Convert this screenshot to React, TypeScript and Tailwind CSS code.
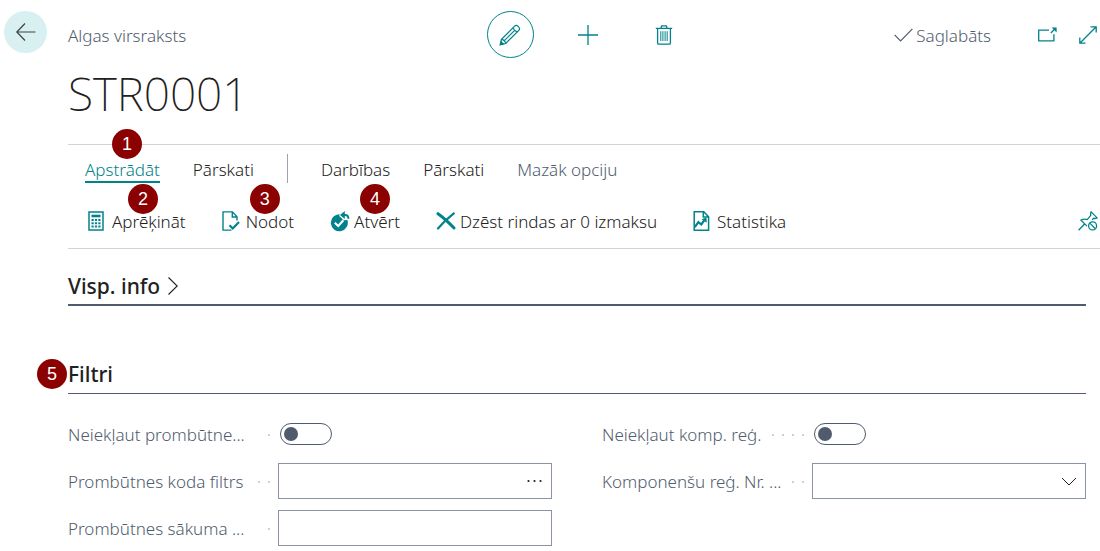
import type { ReactNode } from 'react';

const iconProps = { fill: 'none', stroke: 'currentColor', 'aria-hidden': true } as const;

function Badge({ n, className }: { n: number; className: string }) {
  return (
    <span
      className={`absolute z-10 flex size-[30px] items-center justify-center rounded-full bg-[#8b0000] text-lg leading-none font-normal text-white font-['Liberation_Sans',sans-serif] ${className}`}
    >
      {n}
    </span>
  );
}

function BackIcon() {
  return (
    <svg {...iconProps} width="22" height="20" viewBox="0 0 22 20" strokeWidth="1.2">
      <path d="M20.500 10H2M10 1.500L1.800 10l8.200 8.500" />
    </svg>
  );
}

function PencilIcon() {
  return (
    <svg {...iconProps} width="22" height="22" viewBox="0 0 22 22" strokeWidth="1.200">
      <path d="M1.300 20.700l1.200-5.400L15.400 2.400a2.700 2.700 0 0 1 3.800 0l.4.4a2.700 2.700 0 0 1 0 3.800L6.700 19.500z" />
      <path d="M14.300 3.500q.6 3.600 4.200 4.200M2.500 15.300q3.600.6 4.200 4.200M4.800 17.200l10.600-10.600" />
      <path d="M1.300 20.700l.7-3 2.300 2.300z" fill="currentColor" />
    </svg>
  );
}

function PlusIcon() {
  return (
    <svg {...iconProps} width="20" height="20" viewBox="0 0 20 20" strokeWidth="1.300">
      <path d="M10 0v20M0 10h20" />
    </svg>
  );
}

function TrashIcon() {
  return (
    <svg {...iconProps} width="18" height="20" viewBox="0 0 18 20" strokeWidth="1.300">
      <path d="M.8 3.300h16.400M6.300 3V1.300q0-.5.5-.5h4.400q.5 0 .5.5V3M2.600 3.300V18q0 1.200 1.200 1.200h10.400q1.200 0 1.200-1.200V3.300" />
      <path d="M5.800 6.200v9.800M7.900 6.200v9.800M10.100 6.200v9.800M12.200 6.200v9.800" strokeWidth="1" />
    </svg>
  );
}

function SavedIcon() {
  return (
    <svg {...iconProps} width="19" height="14" viewBox="0 0 19 14" strokeWidth="1.200">
      <path d="M.6 6.800l6 6.200L18.400.8" />
    </svg>
  );
}

function PopOutIcon() {
  return (
    <svg {...iconProps} width="19" height="15" viewBox="0 0 19 15" strokeWidth="1.300">
      <path d="M11 3.200H.7v10.600h15.200V7.200M12.800 6L17.600 1.200" />
      <path d="M13.600.4h5v5z" fill="currentColor" stroke="none" />
    </svg>
  );
}

function ExpandIcon() {
  return (
    <svg {...iconProps} width="18" height="18" viewBox="0 0 18 18" strokeWidth="1.300">
      <path d="M.8 17.200L17.200.8M11.500.8h5.700v5.700M.8 11.500v5.700h5.700" />
    </svg>
  );
}

function CalculatorIcon() {
  return (
    <svg {...iconProps} width="16" height="20" viewBox="0 0 16 20">
      <path d="M1 1h14v18H1z" strokeWidth="1.500" />
      <path d="M3.500 5h9" strokeWidth="2.600" />
      <path d="M3.500 9h9M3.500 12.300h9M3.500 15.600h9" strokeWidth="2" strokeDasharray="2.200 1.200" />
    </svg>
  );
}

function PostIcon() {
  return (
    <svg {...iconProps} width="19" height="20" viewBox="0 0 19 20" strokeWidth="1.400">
      <path d="M15 9.500V5.800L10.500.9H1v18.200h8.500M10.300 1v5h5" />
      <path d="M7.500 14.200l3.300 3.300 6.200-6.400" strokeWidth="2.200" />
    </svg>
  );
}

function ReopenIcon() {
  return (
    <svg {...iconProps} width="20" height="21" viewBox="0 0 20 21">
      <path
        d="M9.800 3.300A8.500 8.500 0 1 0 17.300 8.800c-1.900.8-3.700.4-4.900-.8L9.200 5z"
        fill="currentColor"
        stroke="none"
      />
      <path d="M4.800 11.800l3.400 3.200 5.200-5.700" stroke="#fff" strokeWidth="2.100" />
      <path d="M12.500 4h2.700q3.200 0 3.200 3.800" strokeWidth="2" />
      <path d="M10 4L14.800.1v7.800z" fill="currentColor" stroke="none" />
    </svg>
  );
}

function DeleteIcon() {
  return (
    <svg {...iconProps} width="20" height="18" viewBox="0 0 20 18" strokeLinecap="round">
      <path d="M2 1.700C7.800 5.800 12.800 10.500 18 16" strokeWidth="3" />
      <path d="M17.800 1.400C12 6 6.800 10.800 2 16.500" strokeWidth="2.200" />
    </svg>
  );
}

function StatisticsIcon() {
  return (
    <svg {...iconProps} width="17" height="20" viewBox="0 0 17 20" strokeWidth="1.500">
      <path d="M1.200.8h9.600l4.800 4.900v13.500H1.200zM10.300 1v5h5.200" />
      <path d="M1.800 16.200l3.600-5 2.900 2.300 3.500-4.800" strokeWidth="2.200" />
      <path d="M8.500 8.200l5-1.800.3 5.400z" fill="currentColor" stroke="none" />
    </svg>
  );
}

function UnpinIcon() {
  return (
    <svg {...iconProps} width="20" height="20" viewBox="0 0 20 20" strokeWidth="1.300">
      <path d="M.6 19.300l6.200-6.500M9 15.100L3 9.200q3.300-1.600 6.200-.6l3.600-4.200q-.5-1.900.3-3.500l6 6q-1.700.9-3.500.4l-1.500 1.400" />
      <circle cx="14.600" cy="14.900" r="4" />
      <path d="M11.800 12.100l5.600 5.600" />
    </svg>
  );
}

function Action({ icon, children, badge }: { icon: ReactNode; children: string; badge?: ReactNode }) {
  return (
    <button type="button" className="relative flex h-[30px] items-center gap-1">
      <span className="flex w-5 justify-start text-[#00838a]">{icon}</span>
      <span className="pt-0.5">{children}</span>
      {badge}
    </button>
  );
}

function Field({ id, label, dots, children }: { id: string; label: string; dots: number; children: ReactNode }) {
  return (
    <div className="flex h-9 items-center">
      <div className="flex w-[210px] shrink-0 items-center pt-0.5 pr-2">
        <label htmlFor={id} className="flex-1 whitespace-nowrap text-[#505c6d]">
          {label}
        </label>
        <span aria-hidden="true" className="flex gap-2">
          {Array.from({ length: dots }, (_, i) => (
            <span key={i} className="size-[2px] bg-[#cdd0d4]" />
          ))}
        </span>
      </div>
      <div className="relative flex flex-1 items-center">{children}</div>
    </div>
  );
}

function Toggle({ id }: { id: string }) {
  return (
    <input
      id={id}
      type="checkbox"
      role="switch"
      className="ml-0.5 flex h-[22px] w-[52px] appearance-none items-center rounded-full border border-[#505c6d] bg-white px-[3px] before:size-[14px] before:rounded-full before:bg-[#505c6d] checked:justify-end"
    />
  );
}

const boxClass = 'h-9 w-full border border-[#8b94a3] bg-white px-2 text-[#212121] outline-none';

export default function App() {
  return (
    <div className="min-h-screen overflow-x-hidden bg-white font-['Noto_Sans','Open_Sans',sans-serif] text-[17px] leading-6 font-light text-[#212121]">
      <header className="flex pt-[11px] pl-1">
        <button type="button" aria-label="Back" className="flex h-[42px] w-[43px] items-center justify-center rounded-full bg-[#d9f0f2] text-[#404040]">
          <BackIcon />
        </button>
        <div className="ml-[21px] grid h-[47px] flex-1 grid-cols-[1fr_auto_1fr] items-center">
          <span className="pt-0.5 text-[#505c6d]">Algas virsraksts</span>
          <div className="flex items-center gap-8 pl-1 text-[#00838a]">
            <button type="button" aria-label="Edit" className="flex size-[47px] items-center justify-center rounded-full border border-[#00838a]">
              <PencilIcon />
            </button>
            <button type="button" aria-label="New" className="flex w-11 justify-center">
              <PlusIcon />
            </button>
            <button type="button" aria-label="Delete" className="flex w-11 justify-center">
              <TrashIcon />
            </button>
          </div>
          <div className="flex items-center justify-end pr-[3px] text-[#00838a]">
            <span className="flex items-center gap-[3px] text-[#505c6d]">
              <SavedIcon />
              <span className="pt-0.5">Saglabāts</span>
            </span>
            <button type="button" aria-label="Open in new window" className="ml-[47px]">
              <PopOutIcon />
            </button>
            <button type="button" aria-label="Expand" className="ml-[22px]">
              <ExpandIcon />
            </button>
          </div>
        </div>
      </header>

      <main className="pl-[68px]">
        <h1 className="mt-[5px] text-[46px] leading-[60px] font-extralight">STR0001</h1>

        <section className="mt-[21px] border-y border-[#d2d2d2] pt-[9px] pb-3">
          <nav className="flex gap-[33px] pl-[17px]">
            <button type="button" className="relative flex h-[29px] items-center border-b-2 border-[#00838a] pt-1 text-[#00838a]">
              Apstrādāt
              <Badge n={1} className="-top-[25px] left-[27px]" />
            </button>
            <button type="button" className="pt-0.5">Pārskati</button>
            <span className="w-px bg-[#9aa3af]" />
            <button type="button" className="pt-0.5">Darbības</button>
            <button type="button" className="pt-0.5">Pārskati</button>
            <button type="button" className="pt-0.5 text-[#505c6d]">Mazāk opciju</button>
          </nav>
          <div className="mt-[23px] flex items-center gap-9 pl-5">
            <Action icon={<CalculatorIcon />} badge={<Badge n={2} className="-top-[22px] left-10" />}>Aprēķināt</Action>
            <Action icon={<PostIcon />} badge={<Badge n={3} className="-top-[22px] left-7" />}>Nodot</Action>
            <Action icon={<ReopenIcon />} badge={<Badge n={4} className="-top-[22px] left-[30px]" />}>Atvērt</Action>
            <Action icon={<DeleteIcon />}>Dzēst rindas ar 0 izmaksu</Action>
            <Action icon={<StatisticsIcon />}>Statistika</Action>
            <button type="button" aria-label="Unpin" className="mr-0.5 ml-auto text-[#00838a]">
              <UnpinIcon />
            </button>
          </div>
        </section>

        <div className="pr-[14px]">
          <h2 className="mt-[21px] border-b-2 border-[#505c6d] text-[21px] font-medium">
            <button type="button" className="flex h-[34px] items-center gap-[7px] pb-0.5">
              Visp. info
              <svg {...iconProps} width="12" height="20" viewBox="0 0 12 20" strokeWidth="1.100">
                <path d="M1.500 1.500l8.700 8.500-8.700 8.500" />
              </svg>
            </button>
          </h2>

          <section>
            <h2 className="relative mt-[49px] flex h-[39px] items-center border-b border-[#505c6d] text-[21px] font-medium">
              <Badge n={5} className="top-1 -left-[31px]" />
              Filtri
            </h2>
            <div className="mt-[22px] grid grid-cols-2 gap-x-[50px]">
              <div className="flex flex-col gap-[11px]">
                <Field id="exclude-absence" label="Neiekļaut prombūtne..." dots={1}>
                  <Toggle id="exclude-absence" />
                </Field>
                <Field id="absence-code" label="Prombūtnes koda filtrs" dots={2}>
                  <input id="absence-code" type="text" className={boxClass} />
                  <button type="button" aria-label="Choose" className="absolute right-[9px]">
                    <svg width="17" height="4" viewBox="0 0 17 4" fill="currentColor" aria-hidden="true">
                      <circle cx="2.500" cy="2" r="1.100" />
                      <circle cx="8.500" cy="2" r="1.100" />
                      <circle cx="14.500" cy="2" r="1.100" />
                    </svg>
                  </button>
                </Field>
                <Field id="absence-start" label="Prombūtnes sākuma ..." dots={1}>
                  <input id="absence-start" type="text" className={boxClass} />
                </Field>
              </div>
              <div className="flex flex-col gap-[11px]">
                <Field id="exclude-component" label="Neiekļaut komp. reģ." dots={4}>
                  <Toggle id="exclude-component" />
                </Field>
                <Field id="component-no" label="Komponenšu reģ. Nr. ..." dots={2}>
                  <select id="component-no" className={`${boxClass} appearance-none`}>
                    <option></option>
                  </select>
                  <svg {...iconProps} width="16" height="9" viewBox="0 0 16 9" strokeWidth="1" className="pointer-events-none absolute right-[9px]">
                    <path d="M1 1l7 7 7-7" />
                  </svg>
                </Field>
              </div>
            </div>
          </section>
        </div>
      </main>
    </div>
  );
}
